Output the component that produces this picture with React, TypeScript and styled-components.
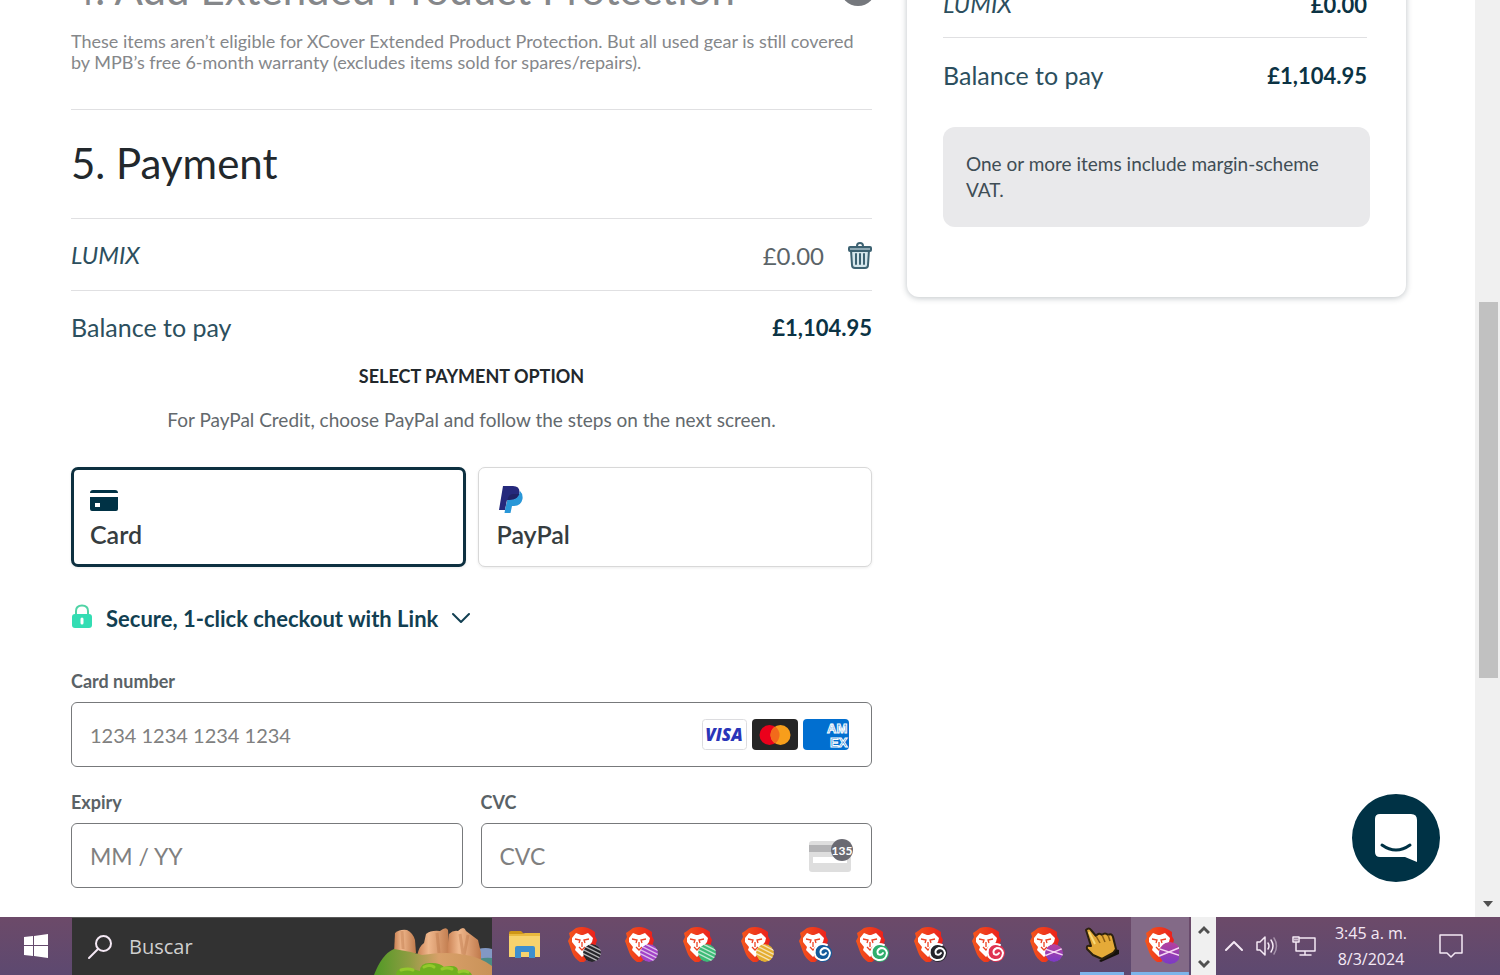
import React from "react";
import styled, { createGlobalStyle } from "styled-components";

const GlobalStyle = createGlobalStyle`
  * { box-sizing: border-box; }
  body { margin: 0; background: #fff; font-family: Lato, "Liberation Sans", sans-serif; color: #0b3344; }
  h2, p { margin: 0; }
  button { font: inherit; color: inherit; background: none; border: 0; padding: 0; cursor: pointer; }
`;

const Screen = styled.div`
  display: flex;
  flex-direction: column;
  height: 100vh;
  overflow: hidden;
`;

const Browser = styled.div`
  flex: 1;
  min-height: 0;
  display: flex;
`;

const Page = styled.div`
  flex: 1;
  min-width: 0;
  position: relative;
  overflow: hidden;
`;

const Columns = styled.main`
  display: grid;
  grid-template-columns: minmax(0, 801fr) minmax(0, 499fr);
  column-gap: 35px;
  align-items: start;
  margin-top: -36px;
  padding: 0 69px 0 71px;
`;

const Protection = styled.section`
  padding-bottom: 36px;
  border-bottom: 1px solid #e0e0e2;
  color: #85878a;
`;

const HeadingRow = styled.div`
  display: flex;
  justify-content: space-between;
  height: 67px;
`;

const Heading = styled.h2`
  font-size: 42px;
  line-height: 50px;
  font-weight: 400;
`;

const StatusDot = styled.span`
  width: 36px;
  height: 36px;
  margin: 6px -4px 0 0;
  border-radius: 50%;
  background: #75787d;
`;

const Description = styled.p`
  font-size: 18px;
  line-height: 21px;
`;

const PaymentTitle = styled.div`
  padding: 28px 0 30px;
  border-bottom: 1px solid #e0e0e2;
  color: #22282c;
`;

const Row = styled.div<{ $divided?: boolean }>`
  display: flex;
  align-items: center;
  justify-content: space-between;
  height: 72px;
  border-bottom: ${(p) => (p.$divided ? "1px solid #e0e0e2" : "0")};
  font-size: 25px;
  line-height: 30px;
  color: #2c4f5e;
`;

const Item = styled.em`
  font-size: 24px;
`;

const Amount = styled.span<{ $strong?: boolean }>`
  display: flex;
  align-items: center;
  gap: 24px;
  padding-top: 2px;
  font-size: ${(p) => (p.$strong ? 22 : 24)}px;
  font-weight: ${(p) => (p.$strong ? 700 : 400)};
  color: ${(p) => (p.$strong ? "#0b3344" : "#5b6468")};
`;

const IconButton = styled.button`
  display: flex;
  color: #3d6272;
`;

const OptionHeading = styled.p`
  font-size: 18px;
  line-height: 26px;
  font-weight: 700;
  text-align: center;
  color: #22282c;
`;

const OptionHint = styled.p`
  margin-top: 18px;
  font-size: 19px;
  line-height: 26px;
  text-align: center;
  color: #63696d;
`;

const Options = styled.div`
  display: grid;
  grid-template-columns: 1fr 1fr;
  gap: 12px;
  margin-top: 34px;
`;

const Option = styled.button<{ $selected?: boolean }>`
  display: flex;
  flex-direction: column;
  justify-content: center;
  gap: 6px;
  height: 100px;
  padding: 0 ${(p) => (p.$selected ? 16 : 18)}px;
  border: ${(p) => (p.$selected ? "3px solid #0d3040" : "1px solid #d8d8d8")};
  border-radius: 7px;
  box-shadow: 0 1px 3px rgba(0, 0, 0, 0.08);
  background: #fff;
  font-size: 25px;
  line-height: 30px;
  font-weight: 600;
  text-align: left;
  color: #363d40;
`;

const LinkToggle = styled.button`
  display: flex;
  align-items: center;
  gap: 14px;
  height: 28px;
  margin-top: 37px;
  padding-left: 1px;
  font-size: 22px;
  font-weight: 700;
  color: #123f52;
`;

const FieldRow = styled.div`
  display: grid;
  grid-template-columns: 1fr 1fr;
  gap: 18px;
`;

const Field = styled.div<{ $top: number }>`
  min-width: 0;
  margin-top: ${(p) => p.$top}px;
`;

const Label = styled.label`
  display: block;
  margin-bottom: 11px;
  font-size: 18px;
  line-height: 20px;
  font-weight: 700;
  color: #5a6266;
`;

const InputBox = styled.div`
  display: flex;
  align-items: center;
  height: 65px;
  padding: 0 18px;
  border: 1px solid #77797b;
  border-radius: 6px;
  background: #fff;
`;

const Input = styled.input<{ $numeric?: boolean }>`
  flex: 1;
  min-width: 0;
  padding: 0;
  border: 0;
  outline: 0;
  font: ${(p) => (p.$numeric ? 20 : 23)}px/28px Lato, "Liberation Sans", sans-serif;
  color: #30313d;
  &::placeholder { color: #808080; opacity: 1; }
`;

const Brands = styled.span`
  display: flex;
  gap: 5px;
  margin-right: 4px;
`;

const Summary = styled.aside`
  height: 333px;
  padding: 7px 36px 0;
  border-radius: 0 0 12px 12px;
  box-shadow: 0 1px 6px rgba(20, 40, 50, 0.28);
`;

const SummaryRow = styled(Row)`
  height: ${(p) => (p.$divided ? "67px" : "73px")};
  margin-right: 3px;
`;

const Notice = styled.p`
  margin-top: 16px;
  padding: 24px 23px;
  border-radius: 12px;
  background: #e9e9eb;
  font-size: 19px;
  line-height: 26px;
  color: #3f4d55;
`;

const ChatButton = styled.button`
  position: absolute;
  right: 35px;
  bottom: 35px;
  width: 88px;
  height: 88px;
  border-radius: 50%;
  background: #003245;
`;

const ScrollTrack = styled.div`
  display: grid;
  grid-template-rows: 302fr 376fr 239fr;
  justify-items: center;
  width: 25px;
  padding: 0 2px 0 3px;
  background: #f0f0f0;
`;

const ScrollThumb = styled.div`
  grid-row: 2;
  width: 19px;
  background: #c1c1c1;
`;

const ScrollDown = styled.svg`
  grid-row: 3;
  align-self: end;
  margin-bottom: 10px;
`;

const Taskbar = styled.footer`
  display: flex;
  height: 58px;
  background: linear-gradient(#6c4a69, #5d4970);
  color: #f5e9f5;
  font-family: "Open Sans", "Noto Sans", sans-serif;
`;

const StartButton = styled.button`
  display: flex;
  align-items: center;
  justify-content: center;
  width: 72px;
`;

const SearchBox = styled.label`
  display: flex;
  align-items: center;
  width: 420px;
  padding-left: 15px;
  border-top: 1px solid #5a5a5a;
  background: #323232;
`;

const SearchInput = styled.input`
  flex: 1;
  min-width: 0;
  margin-left: 16px;
  padding: 0;
  border: 0;
  outline: 0;
  background: none;
  color: #d8d8d8;
  font: 20px/28px "Open Sans", "Noto Sans", sans-serif;
  &::placeholder { color: #d0d0d0; opacity: 1; }
`;

const Apps = styled.nav`
  flex: 1;
  display: flex;
  padding: 0 2px 0 4px;
`;

const underline = {
  idle: "none",
  open: "linear-gradient(#7db4ea, #7db4ea) bottom / 44px 3px no-repeat",
  active: "linear-gradient(#7db4ea, #7db4ea) bottom / 100% 3px no-repeat #836a87",
};

const AppButton = styled.button<{ $state?: "open" | "active" }>`
  flex: 1;
  display: flex;
  align-items: center;
  justify-content: center;
  padding-bottom: 2px;
  background: ${(p) => underline[p.$state ?? "idle"]};
`;

const Stepper = styled.div`
  display: flex;
  flex-direction: column;
  justify-content: space-between;
  align-items: center;
  width: 25px;
  padding: 8px 0 6px;
  background: #f0f0f0;
`;

const Tray = styled.div`
  display: flex;
  align-items: center;
  gap: 12px;
  width: 284px;
  padding-left: 9px;
`;

const TrayButton = styled.button`
  display: flex;
`;

const Clock = styled.time`
  width: 84px;
  margin: 0 14px 0 0;
  font-size: 16px;
  line-height: 26px;
  text-align: center;
`;

const stroke = { fill: "none", stroke: "currentColor", strokeLinecap: "round", strokeLinejoin: "round" } as const;

const TrashIcon = () => (
  <svg width="24" height="28" viewBox="0 0 24 28" {...stroke} strokeWidth="2">
    <path d="M3 8l1 15q0 3 3 3h10q3 0 3-3l1-15z" fill="#d5e6ec" />
    <rect x="1" y="5" width="22" height="4" rx="1" fill="#8fa9b4" />
    <path d="M9 4q0-3 3-3t3 3M8 12v10M12 12v10M16 12v10" />
  </svg>
);

const CardIcon = () => (
  <svg width="28" height="28" viewBox="0 0 28 28" fill="#003245">
    <path d="M0 8q0-3 3-3h22q3 0 3 3zM0 12h28v12q0 2-2 2H2q-2 0-2-2zM5 18v4h5v-4z" fillRule="evenodd" />
  </svg>
);

const PayPalIcon = () => (
  <svg width="28" height="28" viewBox="0 0 28 28">
    <path d="M6 1h10q7 0 6.500 7Q21.500 15 13 15h-3L8 25H2z" fill="#25297c" />
    <path d="M10.500 15q.5-6 6-6h7q-2 6-10.500 6H11.500l-2 10H8.500z" fill="#1f2266" />
    <path d="M23 6q-1 9-10.500 9h-2L8 25l-.5 3h6l1.500-7h2q7 0 8.500-7 .7-5-2.500-8z" fill="#2997d8" />
  </svg>
);

const LockIcon = () => (
  <svg width="20" height="28" viewBox="0 0 20 28">
    <path d="M4 12V7q0-5.500 6-5.500T16 7v5" fill="none" stroke="#4fd3a5" strokeWidth="2" />
    <rect y="10" width="20" height="14" rx="3" fill="#33ddb3" />
    <path d="M10 15v4" stroke="#fff" strokeWidth="3" strokeLinecap="round" />
  </svg>
);

const ChevronIcon = ({ up }: { up?: boolean }) => (
  <svg width="18" height="18" viewBox="0 0 18 18" {...stroke} strokeWidth="2">
    <path d={up ? "M1 13l8-8 8 8" : "M1 5l8 8 8-8"} />
  </svg>
);

const Visa = () => (
  <svg width="45" height="31" viewBox="0 0 45 31" role="img" aria-label="Visa">
    <rect x=".5" y=".5" width="44" height="30" rx="3" fill="#fff" stroke="#dcdcdf" />
    <text x="22" y="22" textAnchor="middle" fontFamily="Open Sans" fontSize="17" fontWeight="800" fontStyle="italic" fill="#2a35b8">VISA</text>
  </svg>
);

const Mastercard = () => (
  <svg width="46" height="31" viewBox="0 0 46 31" role="img" aria-label="Mastercard">
    <rect width="46" height="31" rx="4" fill="#252525" />
    <circle cx="17.500" cy="16" r="10" fill="#eb001b" />
    <circle cx="28.500" cy="16" r="10" fill="#f79e1b" />
    <path d="M23 7.600a10 10 0 0 1 0 16.800 10 10 0 0 1 0-16.800" fill="#f26a1b" />
  </svg>
);

const Amex = () => (
  <svg width="46" height="31" viewBox="0 0 46 31" role="img" aria-label="American Express">
    <rect width="46" height="31" rx="4" fill="#016fd0" />
    <g fontFamily="Liberation Sans" fontSize="13" fontWeight="700" fill="#016fd0" stroke="#fff" strokeWidth="1">
      <text x="24" y="14">AM</text>
      <text x="27" y="28">EX</text>
    </g>
  </svg>
);

const CvcIcon = () => (
  <svg width="44" height="34" viewBox="0 0 44 34">
    <rect y="2" width="42" height="31" rx="3" fill="#dedede" />
    <path d="M0 6h42v7H0z" fill="#b4b4b6" />
    <path d="M4 18h34v6H4z" fill="#fff" />
    <circle cx="33" cy="11" r="11" fill="#6a6a72" />
    <text x="33" y="16" textAnchor="middle" fontFamily="Lato" fontSize="12" fontWeight="700" fill="#fff">135</text>
  </svg>
);

const ChatIcon = () => (
  <svg width="88" height="88" viewBox="0 0 88 88">
    <path d="M28 20h31q6 0 6 6v42l-12-5H28q-5 0-5-5V25q0-5 5-5z" fill="#fff" />
    <path d="M30 51q14 10 28 0" fill="none" stroke="#003245" strokeWidth="3" strokeLinecap="round" />
  </svg>
);

const WindowsIcon = () => (
  <svg width="24" height="24" viewBox="0 0 24 24" fill="#fff">
    <path d="M0 3l9-1v9H0zM10 2l14-2v11H10zM0 12h9v10l-9-1zM10 12h14v12l-14-2z" />
  </svg>
);

const SearchIcon = () => (
  <svg width="26" height="26" viewBox="0 0 26 26" {...stroke} strokeWidth="2">
    <circle cx="16.500" cy="9.500" r="7.500" />
    <path d="M11 15L2 24" />
  </svg>
);

const CanyonArt = () => (
  <svg width="118" height="57" viewBox="0 0 118 57">
    <defs>
      <linearGradient id="rock">
        <stop offset="0" stopColor="#c98052" />
        <stop offset=".35" stopColor="#efb78c" />
        <stop offset="1" stopColor="#c07a4c" />
      </linearGradient>
      <linearGradient id="hill">
        <stop offset="0" stopColor="#4f9a25" />
        <stop offset=".3" stopColor="#8f9c42" />
        <stop offset=".55" stopColor="#d9a06a" />
        <stop offset="1" stopColor="#c99258" />
      </linearGradient>
    </defs>
    <path d="M104 31q8-2 14 0v10h-14z" fill="#8298c4" />
    <path d="M104 41q8-2 14-1v8h-14z" fill="#4c8b84" />
    <g fill="url(#rock)">
      <path d="M20 35l1-20q5-4 12-3 6 3 8 10l1 13z" />
      <path d="M43 38q2-10 7-13l2-9q5-4 14-3 6-5 8-1l2 26z" />
      <path d="M73 38l2-22q4-4 9-3 6-6 8 0l4 3 8 6 3 13v11z" />
    </g>
    <path d="M28 13l1 18M63 15l2 20M86 16l3 20M94 17l-4 20" stroke="#b87347" strokeWidth="3" fill="none" opacity=".4" />
    <path d="M0 57Q8 36 20 31q14 2 28 6 26-4 44 0 16 3 26 11v9z" fill="url(#hill)" />
    <path d="M22 57q0-8 12-6 6 0 12 2 0-9 12-8 8 0 12 4 14-3 14 4 12-2 14 4z" fill="#6fb01f" />
    <path d="M27 52q7-2 12 0M50 49q6-3 10 0M68 51q5-2 10 0M85 54q5-2 9 0" fill="none" stroke="#94c92c" strokeWidth="3" strokeLinecap="round" />
  </svg>
);

const FolderIcon = () => (
  <svg width="32" height="28" viewBox="0 0 32 28">
    <path d="M0 2q0-2 2-2h10l3 3H0z" fill="#cf9616" />
    <path d="M0 3h31v23H0z" fill="#f7d36d" />
    <path d="M0 3h13l3-1h15v3H0z" fill="#e9b93e" />
    <path d="M6 27V17q0-2 2-2h16q2 0 2 2v10h-6v-6h-8v6z" fill="#3d8fce" />
  </svg>
);

type BadgeKind = "stripes" | "swirl" | "cross";

const BraveIcon = ({ id, kind, color, large }: { id: string; kind: BadgeKind; color: string; large?: boolean }) => {
  const [cx, cy, r] = large ? [26, 27, 11] : [25, 27, 9];
  return (
    <svg width="38" height="38" viewBox="-3 0 38 38">
      <defs>
        <linearGradient id={`${id}-mane`}>
          <stop offset="0" stopColor="#f4561c" />
          <stop offset="1" stopColor="#ea1f1c" />
        </linearGradient>
        <linearGradient id={`${id}-ball`} x1="0" y1="0" x2="0" y2="1">
          <stop offset="0" stopColor={kind === "cross" ? "#b8419c" : color} />
          <stop offset="1" stopColor={color} />
        </linearGradient>
        <clipPath id={`${id}-clip`}>
          <circle cx={cx} cy={cy} r={r} />
        </clipPath>
      </defs>
      <path d="M9 2q6-2 12 0l4 2 3 2 0 4 2 4-4 14-9 8-4 0q-6-4-8-10L1 15l2-4-1-4 3-2z" fill={`url(#${id}-mane)`} />
      <path d="M5 12l4-5 5 2h2l5-2 5 5-1 4-4 5 1 3-7 7-7-7 1-3-4-5z" fill="#fff" />
      <path d="M8 13l5 1-1 3M22 13l-5 1 1 3M15 16v5M12 21l3 3 3-3" fill="none" stroke="#ed4020" strokeWidth="1.300" />
      {kind === "swirl" ? (
        <g fill="none" strokeLinecap="round">
          <circle cx="25" cy="27" r="9" fill={color} />
          <path d="M29 19q-8-3-12 4-2 9 6 11 8 1 9-7-1-5-6-5-5 2-3 6 3 2 5-1" stroke="#fff" strokeWidth="2" />
        </g>
      ) : (
        <g clipPath={`url(#${id}-clip)`}>
          <circle cx={cx} cy={cy} r={r} fill={`url(#${id}-ball)`} />
          {kind === "stripes" ? (
            <path d="M13 14l24 12M13 18l24 12M13 22l24 12M13 26l24 12M13 10l24 12" stroke="#fff" strokeOpacity=".65" strokeWidth="1.500" />
          ) : (
            <path d="M13 22l24 8M13 31l24-10" stroke="#f5d6f3" strokeWidth="1.500" />
          )}
        </g>
      )}
    </svg>
  );
};

const HandIcon = () => (
  <svg width="36" height="36" viewBox="0 0 36 36">
    <path d="M15 34l2 1 18-8v-4l-4-1z" fill="#15100c" />
    <path d="M2 3q3-3 5 0l5 6q3-4 6-1 3-3 6 0 4-2 5 2l3 12-3 4-11 6-9-4-6-6q-1-4 3-3l1 0z" fill="#e5aa38" stroke="#2c210f" strokeWidth="2" strokeLinejoin="round" />
    <path d="M12 9l4 7M18 8l3 7M24 8l2 6" stroke="#8a5d13" strokeWidth="1.500" />
    <path d="M5 5l6 12" stroke="#f8d978" strokeWidth="2" />
  </svg>
);

const SpeakerIcon = () => (
  <svg width="24" height="22" viewBox="0 0 24 22" {...stroke} strokeWidth="1.500">
    <path d="M2 7h3l5-5v18l-5-5H2zM13 8q2 3 0 6M16 5q4 6 0 12" />
    <path d="M19 3q5 8 0 16" opacity=".45" />
  </svg>
);

const NetworkIcon = () => (
  <svg width="26" height="22" viewBox="0 0 26 22" {...stroke} strokeWidth="1.500">
    <path d="M9 3h15v13H5V9M14 16v4M9 20h11M2 2h6v5H2zM5 7v2M4 4v1M6 4v1" />
  </svg>
);

const NoticeIcon = () => (
  <svg width="24" height="24" viewBox="0 0 24 24" {...stroke} strokeWidth="1.500">
    <path d="M1 1h22v18h-7l-4 4-4-4H1z" />
  </svg>
);

const braves: { id: string; kind: BadgeKind; color: string }[] = [
  { id: "black-stripes", kind: "stripes", color: "#26262a" },
  { id: "violet-stripes", kind: "stripes", color: "#a143c8" },
  { id: "green-stripes", kind: "stripes", color: "#3dbb77" },
  { id: "gold-stripes", kind: "stripes", color: "#e4ae31" },
  { id: "blue-swirl", kind: "swirl", color: "#125b9b" },
  { id: "green-swirl", kind: "swirl", color: "#2fae6c" },
  { id: "black-swirl", kind: "swirl", color: "#24262c" },
  { id: "red-swirl", kind: "swirl", color: "#df3451" },
  { id: "violet-cross", kind: "cross", color: "#7a3ac6" },
];

export default function App() {
  return (
    <Screen>
      <GlobalStyle />
      <Browser>
        <Page>
          <Columns>
            <div>
              <Protection>
                <HeadingRow>
                  <Heading>4. Add Extended Product Protection</Heading>
                  <StatusDot />
                </HeadingRow>
                <Description>
                  These items aren’t eligible for XCover Extended Product Protection. But all used gear is still covered
                  by MPB’s free 6-month warranty (excludes items sold for spares/repairs).
                </Description>
              </Protection>
              <section>
                <PaymentTitle>
                  <Heading>5. Payment</Heading>
                </PaymentTitle>
                <Row $divided>
                  <Item>LUMIX</Item>
                  <Amount>
                    £0.00
                    <IconButton aria-label="Remove item"><TrashIcon /></IconButton>
                  </Amount>
                </Row>
                <Row>
                  <span>Balance to pay</span>
                  <Amount $strong>£1,104.95</Amount>
                </Row>
                <OptionHeading>SELECT PAYMENT OPTION</OptionHeading>
                <OptionHint>For PayPal Credit, choose PayPal and follow the steps on the next screen.</OptionHint>
                <Options>
                  <Option $selected aria-pressed="true"><CardIcon />Card</Option>
                  <Option aria-pressed="false"><PayPalIcon />PayPal</Option>
                </Options>
                <LinkToggle aria-expanded="false">
                  <LockIcon />
                  Secure, 1-click checkout with Link
                  <ChevronIcon />
                </LinkToggle>
                <Field $top={39}>
                  <Label htmlFor="card-number">Card number</Label>
                  <InputBox>
                    <Input id="card-number" $numeric placeholder="1234 1234 1234 1234" />
                    <Brands><Visa /><Mastercard /><Amex /></Brands>
                  </InputBox>
                </Field>
                <FieldRow>
                  <Field $top={25}>
                    <Label htmlFor="expiry">Expiry</Label>
                    <InputBox><Input id="expiry" placeholder="MM / YY" /></InputBox>
                  </Field>
                  <Field $top={25}>
                    <Label htmlFor="cvc">CVC</Label>
                    <InputBox>
                      <Input id="cvc" placeholder="CVC" />
                      <CvcIcon />
                    </InputBox>
                  </Field>
                </FieldRow>
              </section>
            </div>
            <Summary>
              <SummaryRow $divided>
                <Item>LUMIX</Item>
                <Amount $strong>£0.00</Amount>
              </SummaryRow>
              <SummaryRow>
                <span>Balance to pay</span>
                <Amount $strong>£1,104.95</Amount>
              </SummaryRow>
              <Notice>One or more items include margin-scheme VAT.</Notice>
            </Summary>
          </Columns>
          <ChatButton aria-label="Open chat"><ChatIcon /></ChatButton>
        </Page>
        <ScrollTrack aria-hidden="true">
          <ScrollThumb />
          <ScrollDown width="10" height="6" viewBox="0 0 10 6"><path d="M0 0h10L5 6z" fill="#505050" /></ScrollDown>
        </ScrollTrack>
      </Browser>
      <Taskbar>
        <StartButton aria-label="Start"><WindowsIcon /></StartButton>
        <SearchBox>
          <SearchIcon />
          <SearchInput aria-label="Buscar" placeholder="Buscar" />
          <CanyonArt />
        </SearchBox>
        <Apps>
          <AppButton aria-label="Files"><FolderIcon /></AppButton>
          {braves.map((b) => (
            <AppButton key={b.id} aria-label="Brave"><BraveIcon {...b} /></AppButton>
          ))}
          <AppButton $state="open" aria-label="Pointer"><HandIcon /></AppButton>
          <AppButton $state="active" aria-label="Brave"><BraveIcon id="active" kind="cross" color="#7a3ac6" large /></AppButton>
        </Apps>
        <Stepper>
          <TrayButton aria-label="Scroll up"><svg width="12" height="10" viewBox="0 0 12 10" fill="none" stroke="#505050" strokeWidth="3"><path d="M1 8l5-5 5 5" /></svg></TrayButton>
          <TrayButton aria-label="Scroll down"><svg width="12" height="10" viewBox="0 0 12 10" fill="none" stroke="#505050" strokeWidth="3"><path d="M1 2l5 5 5-5" /></svg></TrayButton>
        </Stepper>
        <Tray>
          <TrayButton aria-label="Hidden icons"><ChevronIcon up /></TrayButton>
          <TrayButton aria-label="Volume"><SpeakerIcon /></TrayButton>
          <TrayButton aria-label="Network"><NetworkIcon /></TrayButton>
          <Clock>3:45 a. m.<br />8/3/2024</Clock>
          <TrayButton aria-label="Notifications"><NoticeIcon /></TrayButton>
        </Tray>
      </Taskbar>
    </Screen>
  );
}
